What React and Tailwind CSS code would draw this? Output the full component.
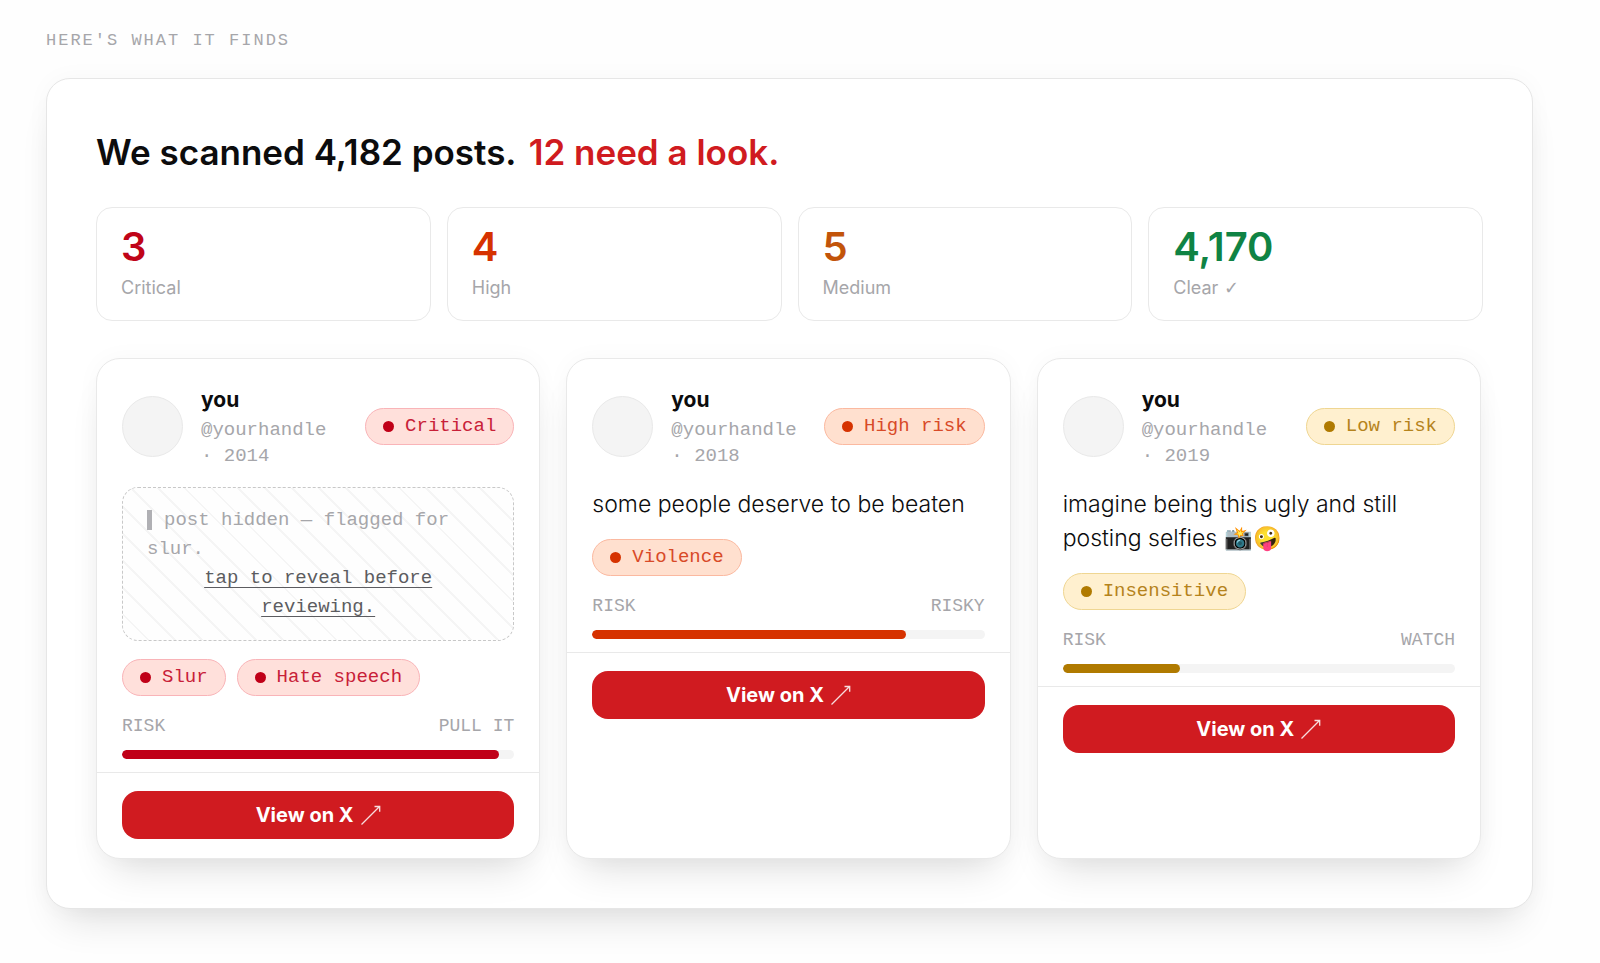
import { clsx } from 'clsx'

const stats = [
  { value: '3', label: 'Critical', color: 'text-[#c00418]' },
  { value: '4', label: 'High', color: 'text-[#d63200]' },
  { value: '5', label: 'Medium', color: 'text-[#c2540a]' },
  { value: '4,170', label: 'Clear', check: true, color: 'text-[#0f8344]' },
]

const tones = {
  critical: {
    pill: 'border-[#f9b4b8] bg-[#ffe0db] text-[#c82038]',
    fill: 'bg-[#c00018]',
  },
  high: {
    pill: 'border-[#fbb9a0] bg-[#ffe0cf] text-[#d84a28]',
    fill: 'bg-[#d63200]',
  },
  low: {
    pill: 'border-[#efd692] bg-[#fff0cf] text-[#b5831c]',
    fill: 'bg-[#b07a00]',
  },
}

const posts = [
  {
    year: '2014',
    tone: 'critical',
    severity: 'Critical',
    hiddenFor: 'slur',
    tags: ['Slur', 'Hate speech'],
    verdict: 'Pull it',
    risk: 96,
  },
  {
    year: '2018',
    tone: 'high',
    severity: 'High risk',
    text: 'some people deserve to be beaten',
    tags: ['Violence'],
    verdict: 'Risky',
    risk: 80,
  },
  {
    year: '2019',
    tone: 'low',
    severity: 'Low risk',
    text: 'imagine being this ugly and still posting selfies 📸🤪',
    tags: ['Insensitive'],
    verdict: 'Watch',
    risk: 30,
  },
]

function Pill({ tone, children }) {
  return (
    <span
      className={clsx(
        'inline-flex h-[37px] shrink-0 items-center gap-[11px] rounded-full border px-[17px] font-["Liberation_Mono",monospace] text-[19px] whitespace-nowrap',
        tones[tone].pill
      )}
    >
      <span className={clsx('size-[11px] rounded-full', tones[tone].fill)} />
      {children}
    </span>
  )
}

function ArrowIcon() {
  return (
    <svg
      viewBox="0 0 20 20"
      className="size-5 opacity-85"
      fill="none"
      stroke="currentColor"
      strokeWidth="1.3"
      aria-hidden="true"
    >
      <path d="M0.5 19.5 18.5 1.5M13.5 1.5h5.2v5.2" />
    </svg>
  )
}

function HiddenPost({ reason }) {
  return (
    <div className="rounded-2xl border border-dashed border-[#c8c8c8] bg-[repeating-linear-gradient(45deg,#fefefe_0_17px,#f5f5f5_17px_19px)] px-6 py-[18px] font-['Liberation_Mono',monospace] text-[19px] leading-[29px] text-[#a6a6aa]">
      <p>
        <span className="mr-3 inline-block h-5 w-[5px] bg-[#b0b0b4] align-middle" />
        post hidden — flagged for {reason}.
      </p>
      <button
        type="button"
        className="w-full text-center text-[#5c5c60] underline underline-offset-4"
      >
        tap to reveal before reviewing.
      </button>
    </div>
  )
}

function PostCard({ post }) {
  return (
    <article className="rounded-3xl border border-[#e9e9e9] bg-white shadow-[0_24px_40px_-16px_rgba(0,0,0,0.14),0_0_24px_rgba(0,0,0,0.03)]">
      <div className="flex flex-col gap-[18px] px-[25px] pt-6 pb-[13px]">
        <header className="flex items-center gap-[18px]">
          <div className="size-[61px] shrink-0 rounded-full border border-[#e9e9e9] bg-[#f4f4f4]" />
          <div className="min-w-0 flex-1">
            <p className="text-[21px] leading-[34px] font-bold text-[#0c0c0d]">you</p>
            <p className="font-['Liberation_Mono',monospace] text-[19px] leading-[26px] text-[#a6a6aa]">
              @yourhandle <span className="whitespace-nowrap">· {post.year}</span>
            </p>
          </div>
          <Pill tone={post.tone}>{post.severity}</Pill>
        </header>

        {post.hiddenFor ? (
          <HiddenPost reason={post.hiddenFor} />
        ) : (
          <p className="text-[23px] leading-[34px] font-light text-[#0c0c0d]">{post.text}</p>
        )}

        <div className="flex flex-wrap gap-[11px]">
          {post.tags.map((tag) => (
            <Pill key={tag} tone={post.tone}>
              {tag}
            </Pill>
          ))}
        </div>

        <div>
          <div className="flex justify-between font-['Liberation_Mono',monospace] text-lg leading-[25px] text-[#a6a6aa] uppercase">
            <span>Risk</span>
            <span>{post.verdict}</span>
          </div>
          <div className="mt-[11px] h-[9px] overflow-hidden rounded-full bg-[#f4f4f4]">
            <div
              className={clsx('h-full rounded-full', tones[post.tone].fill)}
              style={{ width: `${post.risk}%` }}
            />
          </div>
        </div>
      </div>

      <div className="border-t border-[#e9e9e9] px-[25px] pt-[18px] pb-[19px]">
        <button
          type="button"
          className="flex h-12 w-full items-center justify-center gap-[7px] rounded-2xl bg-[#d01b20] text-xl font-bold text-white"
        >
          View on X
          <ArrowIcon />
        </button>
      </div>
    </article>
  )
}

export default function App() {
  return (
    <main className="min-h-screen bg-[#fefefe] pt-[29px] pr-[67px] pb-[54px] pl-[46px] font-['Inter',sans-serif]">
      <p className="font-['Liberation_Mono',monospace] text-[17px] leading-6 tracking-[2px] text-[#a6a6aa] uppercase">
        Here's what it finds
      </p>

      <section className="mt-[25px] rounded-3xl border border-[#e6e6e6] bg-white p-[49px] shadow-[0_24px_40px_-16px_rgba(0,0,0,0.14),0_0_24px_rgba(0,0,0,0.03)]">
        <h2 className="text-[35px] leading-[48px] font-semibold text-[#0c0c0d]">
          We scanned 4,182 posts. <span className="ml-1 text-[#d01b20]">12 need a look.</span>
        </h2>

        <div className="mt-[31px] grid grid-cols-4 gap-4">
          {stats.map((stat) => (
            <div key={stat.label} className="rounded-2xl border border-[#e9e9e9] px-6 py-[17px]">
              <p className={clsx('text-[40px] leading-[44px] font-semibold', stat.color)}>
                {stat.value}
              </p>
              <p className="mt-1 text-lg leading-[30px] text-[#a6a6aa]">
                {stat.label}
                {stat.check && <span className="font-['DejaVu_Sans',sans-serif]"> ✓</span>}
              </p>
            </div>
          ))}
        </div>

        <div className="mt-[37px] grid grid-cols-3 gap-[26px] pr-0.5">
          {posts.map((post) => (
            <PostCard key={post.year} post={post} />
          ))}
        </div>
      </section>
    </main>
  )
}
